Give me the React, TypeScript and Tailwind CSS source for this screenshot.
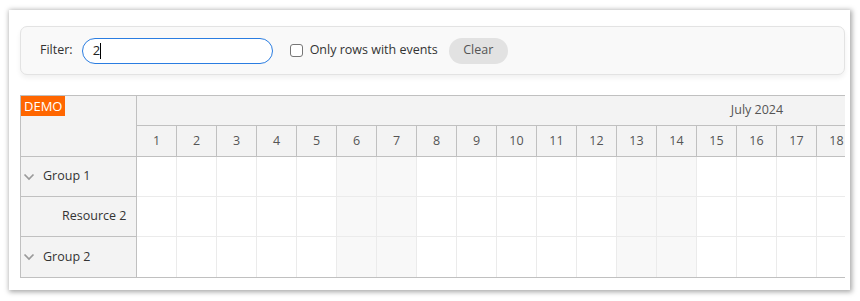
import React from "react";

const days = Array.from({ length: 18 }, (_, i) => i + 1);
const weekend = new Set([6, 7, 13, 14]);

const rows = [
  { name: "Group 1", group: true },
  { name: "Resource 2", group: false },
  { name: "Group 2", group: true },
];

function Chevron() {
  return (
    <svg width="12" height="12" viewBox="0 0 12 12" className="shrink-0">
      <polyline points="1.5,3.5 6,8 10.5,3.5" fill="none" stroke="#9a9a9a" strokeWidth="1.7" />
    </svg>
  );
}

export default function App() {
  return (
    <div
      className="w-[860px] h-[301px] bg-white pt-[10px] pl-[9px] overflow-hidden text-[12.5px] text-[#333]"
      style={{ fontFamily: '"Open Sans", "Noto Sans", sans-serif' }}
    >
      <div className="w-[841px] h-[280px] bg-white shadow-[1px_1px_5px_1px_rgba(0,0,0,0.35)] pt-[16px] pl-[11px]">
        {/* toolbar */}
        <div className="w-[825px] h-[49px] rounded-[7px] border border-[#e3e3e3] bg-[#f9f9f9] shadow-[0_3px_5px_rgba(0,0,0,0.06)] flex items-center pl-[19px]">
          <span className="text-[#333]">Filter:</span>
          <div className="ml-[9px] w-[191px] h-[26px] rounded-full border border-[#2a7de1] bg-white flex items-center pl-[10px]">
            <span className="text-[#222] text-[13px]">2</span>
            <span className="w-px h-[16px] bg-black" />
          </div>
          <label className="ml-[17px] flex items-center gap-[7px]">
            <span className="w-[13px] h-[13px] rounded-[3px] border border-[#767676] bg-white" />
            <span>Only rows with events</span>
          </label>
          <button type="button" className="ml-[11px] h-[26px] w-[59px] rounded-full bg-[#e2e2e2] text-[#555]">
            Clear
          </button>
        </div>

        {/* scheduler */}
        <div className="mt-[20px] w-[825px] border-t border-l border-b border-[#c0c0c0] flex overflow-hidden">
          <div className="w-[116px] shrink-0 bg-[#f3f3f3] border-r border-[#c0c0c0]">
            <div className="h-[61px] border-b border-[#c0c0c0] relative">
              <span className="absolute left-0 top-0 bg-[#ff6600] text-white text-[13px] px-[3px] h-[20px] leading-[20px]">DEMO</span>
            </div>
            {rows.map((r, i) => (
              <div
                key={r.name}
                className={`h-[40px] flex items-center ${i < rows.length - 1 ? "border-b border-[#c0c0c0]" : ""} ${
                  r.group ? "pl-[2px] gap-[8px]" : "pl-[41px]"
                }`}
              >
                {r.group && <Chevron />}
                <span>{r.name}</span>
              </div>
            ))}
          </div>
          <div className="flex-1 overflow-hidden">
            <div className="w-[1240px]">
              <div className="h-[30px] bg-[#f3f3f3] border-b border-[#c0c0c0] flex items-center justify-center text-[#555]">
                July 2024
              </div>
              <div className="h-[31px] bg-[#f3f3f3] border-b border-[#c0c0c0] flex">
                {days.map((d) => (
                  <div key={d} className="w-[40px] shrink-0 border-r border-[#c0c0c0] flex items-center justify-center text-[#555]">
                    {d}
                  </div>
                ))}
              </div>
              {rows.map((r, i) => (
                <div key={r.name} className={`h-[40px] flex ${i < rows.length - 1 ? "border-b border-[#ebebeb]" : ""}`}>
                  {days.map((d) => (
                    <div
                      key={d}
                      className={`w-[40px] shrink-0 border-r border-[#ebebeb] ${weekend.has(d) ? "bg-[#f8f8f8]" : "bg-white"}`}
                    />
                  ))}
                </div>
              ))}
            </div>
          </div>
        </div>
      </div>
    </div>
  );
}
